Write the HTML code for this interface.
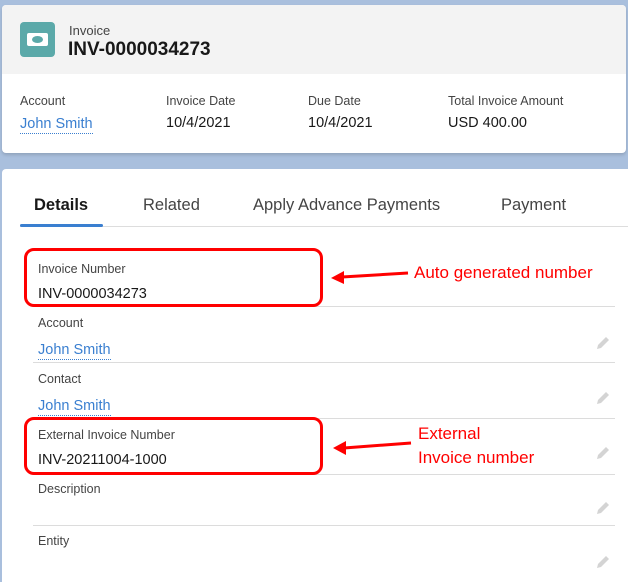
<!DOCTYPE html>
<html><head><style>
*{margin:0;padding:0;box-sizing:border-box}
body{width:628px;height:582px;overflow:hidden;background:#a9bfdd;font-family:"Liberation Sans",sans-serif;position:relative;color:#181818}
.a{position:absolute;white-space:nowrap}
.lbl{font-size:12.5px;color:#444}
.val{font-size:14.5px;color:#181818}
.lnk{font-size:14.5px;color:#3a7fd0;border-bottom:1px dotted #3a7fd0;line-height:17px}
.sep{position:absolute;left:33px;width:582px;height:1px;background:#dcdcdc}
.red{position:absolute;border:3px solid #f00;border-radius:10px}
.note{position:absolute;color:#f00;font-size:17px;white-space:nowrap}
.pen{position:absolute;width:16px;height:16px}
</style></head><body>
<div class="a" style="left:2px;top:5px;width:624px;height:148px;background:#fff;border-radius:4px;box-shadow:0 2px 3px rgba(0,0,0,.15)"></div>
<div class="a" style="left:2px;top:5px;width:624px;height:69px;background:#f3f3f3;border-radius:4px 4px 0 0"></div>
<div class="a" style="left:20px;top:22px;width:35px;height:35px;background:#5ba9a9;border-radius:4px"></div>
<div class="a" style="left:27px;top:33px;width:21px;height:13px;background:#fff;border-radius:2px"></div>
<div class="a" style="left:32px;top:36px;width:11px;height:7px;background:#5ba9a9;border-radius:50%"></div>
<div class="a" style="left:69px;top:23px;font-size:13px;color:#444">Invoice</div>
<div class="a" style="left:68px;top:39px;font-size:19px;font-weight:bold">INV-0000034273</div>
<div class="a lbl" style="left:20px;top:94px">Account</div>
<div class="a lnk" style="left:20px;top:116px">John Smith</div>
<div class="a lbl" style="left:166px;top:94px">Invoice Date</div>
<div class="a val" style="left:166px;top:115px">10/4/2021</div>
<div class="a lbl" style="left:308px;top:94px">Due Date</div>
<div class="a val" style="left:308px;top:115px">10/4/2021</div>
<div class="a lbl" style="left:448px;top:94px">Total Invoice Amount</div>
<div class="a val" style="left:448px;top:115px">USD 400.00</div>

<div class="a" style="left:2px;top:169px;width:626px;height:413px;background:#fff;border-radius:4px 0 0 0"></div>
<div class="a" style="left:34px;top:196px;font-size:16.5px;font-weight:bold">Details</div>
<div class="a" style="left:143px;top:196px;font-size:16.5px;color:#444">Related</div>
<div class="a" style="left:253px;top:196px;font-size:16.5px;color:#444">Apply Advance Payments</div>
<div class="a" style="left:501px;top:196px;font-size:16.5px;color:#444">Payment</div>
<div class="a" style="left:20px;top:226px;width:608px;height:1px;background:#ddd"></div>
<div class="a" style="left:20px;top:224px;width:83px;height:3px;background:#3a7fd0;border-radius:2px"></div>

<div class="a lbl" style="left:38px;top:262px">Invoice Number</div>
<div class="a val" style="left:38px;top:286px">INV-0000034273</div>
<div class="sep" style="top:306px"></div>
<div class="a lbl" style="left:38px;top:316px">Account</div>
<div class="a lnk" style="left:38px;top:342px">John Smith</div>
<div class="sep" style="top:362px"></div>
<div class="a lbl" style="left:38px;top:372px">Contact</div>
<div class="a lnk" style="left:38px;top:398px">John Smith</div>
<div class="sep" style="top:418px"></div>
<div class="a lbl" style="left:38px;top:428px">External Invoice Number</div>
<div class="a val" style="left:38px;top:452px">INV-20211004-1000</div>
<div class="sep" style="top:474px"></div>
<div class="a lbl" style="left:38px;top:482px">Description</div>
<div class="sep" style="top:525px"></div>
<div class="a lbl" style="left:38px;top:534px">Entity</div>

<svg class="pen" style="left:595px;top:335px" viewBox="0 0 16 16"><path d="M2 14 L3 10 L11 2 L14 5 L6 13 Z" fill="#d4d4d4"/></svg>
<svg class="pen" style="left:595px;top:390px" viewBox="0 0 16 16"><path d="M2 14 L3 10 L11 2 L14 5 L6 13 Z" fill="#d4d4d4"/></svg>
<svg class="pen" style="left:595px;top:445px" viewBox="0 0 16 16"><path d="M2 14 L3 10 L11 2 L14 5 L6 13 Z" fill="#d4d4d4"/></svg>
<svg class="pen" style="left:595px;top:500px" viewBox="0 0 16 16"><path d="M2 14 L3 10 L11 2 L14 5 L6 13 Z" fill="#d4d4d4"/></svg>
<svg class="pen" style="left:595px;top:554px" viewBox="0 0 16 16"><path d="M2 14 L3 10 L11 2 L14 5 L6 13 Z" fill="#d4d4d4"/></svg>

<div class="red" style="left:24px;top:248px;width:299px;height:59px"></div>
<div class="red" style="left:24px;top:417px;width:299px;height:58px"></div>

<svg class="a" style="left:0;top:0" width="628" height="582">
<line x1="408" y1="273" x2="342" y2="277" stroke="#f00" stroke-width="3"/>
<polygon points="331,278 344,271 344,284" fill="#f00"/>
<line x1="411" y1="443" x2="344" y2="448" stroke="#f00" stroke-width="3"/>
<polygon points="333,448 346,441 346,455" fill="#f00"/>
</svg>
<div class="note" style="left:414px;top:263px">Auto generated number</div>
<div class="note" style="left:418px;top:424px">External</div>
<div class="note" style="left:418px;top:448px">Invoice number</div>
</body></html>
